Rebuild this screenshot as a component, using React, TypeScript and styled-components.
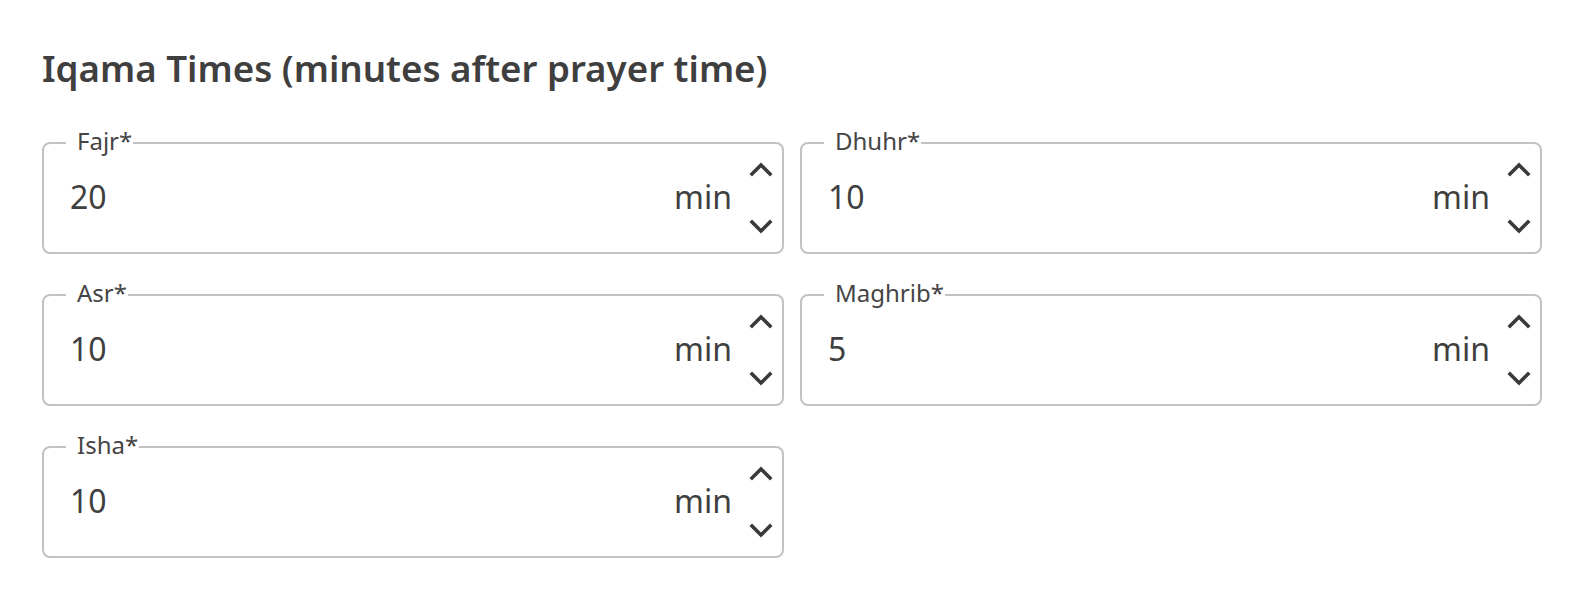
import React, { useState } from "react";
import styled, { createGlobalStyle } from "styled-components";

const GlobalStyle = createGlobalStyle`
  html, body {
    margin: 0;
    padding: 0;
    background: #ffffff;
  }
  body {
    font-family: "Noto Sans", "Open Sans", Arial, sans-serif;
    color: #3f3f3f;
  }
`;

const Page = styled.div`
  width: 1584px;
  box-sizing: border-box;
  padding: 46px 42px 0 42px;
`;

const Title = styled.h2`
  margin: 0 0 52px 0;
  font-size: 36.7px;
  line-height: 44px;
  font-weight: 600;
  color: #3f3f3f;
`;

const FieldGrid = styled.div`
  display: grid;
  grid-template-columns: 1fr 1fr;
  column-gap: 16px;
  row-gap: 40px;
`;

const Field = styled.div`
  position: relative;
  height: 112px;
  box-sizing: border-box;
  border: 2px solid #c2c2c2;
  border-radius: 8px;
  display: flex;
  align-items: center;
  padding: 0 8px 2px 26px;
`;

const Label = styled.label`
  position: absolute;
  left: 22px;
  top: -15px;
  padding: 0 1px 0 11px;
  background: #ffffff;
  font-size: 24px;
  line-height: 24px;
  color: #454545;
`;

const ValueInput = styled.input`
  flex: 1;
  min-width: 0;
  border: none;
  outline: none;
  padding: 0;
  background: transparent;
  font-family: inherit;
  font-size: 32px;
  line-height: 44px;
  color: #3f3f3f;
`;

const Unit = styled.span`
  font-size: 32px;
  line-height: 44px;
  color: #3f3f3f;
`;

const Spinner = styled.div`
  display: flex;
  flex-direction: column;
  justify-content: space-between;
  align-items: center;
  height: 76px;
  margin: 2px 0 0 16px;
`;

const SpinButton = styled.button`
  display: flex;
  align-items: center;
  justify-content: center;
  width: 26px;
  height: 18px;
  padding: 0;
  border: none;
  background: none;
  cursor: pointer;
  color: #3a3a3a;
`;

const Chevron = ({ up }: { up?: boolean }) => (
  <svg width="24" height="16" viewBox="0 0 24 16" fill="none">
    <polyline
      points={up ? "3,13 12,4 21,13" : "3,3 12,12 21,3"}
      stroke="currentColor"
      strokeWidth="3.6"
      strokeLinecap="square"
    />
  </svg>
);

type Prayer = { name: string; value: number };

const initial: Prayer[] = [
  { name: "Fajr", value: 20 },
  { name: "Dhuhr", value: 10 },
  { name: "Asr", value: 10 },
  { name: "Maghrib", value: 5 },
  { name: "Isha", value: 10 },
];

function MinutesField({
  prayer,
  onChange,
}: {
  prayer: Prayer;
  onChange: (v: number) => void;
}) {
  const id = `iqama-${prayer.name.toLowerCase()}`;
  return (
    <Field>
      <Label htmlFor={id}>{prayer.name}*</Label>
      <ValueInput
        id={id}
        value={prayer.value}
        onChange={(e) => onChange(Number(e.target.value.replace(/\D/g, "")) || 0)}
      />
      <Unit>min</Unit>
      <Spinner>
        <SpinButton aria-label="increase" onClick={() => onChange(prayer.value + 1)}>
          <Chevron up />
        </SpinButton>
        <SpinButton aria-label="decrease" onClick={() => onChange(Math.max(0, prayer.value - 1))}>
          <Chevron />
        </SpinButton>
      </Spinner>
    </Field>
  );
}

export default function App() {
  const [prayers, setPrayers] = useState<Prayer[]>(initial);

  const update = (i: number, v: number) =>
    setPrayers((p) => p.map((x, j) => (j === i ? { ...x, value: v } : x)));

  return (
    <>
      <GlobalStyle />
      <Page>
        <Title>Iqama Times (minutes after prayer time)</Title>
        <FieldGrid>
          {prayers.map((p, i) => (
            <MinutesField key={p.name} prayer={p} onChange={(v) => update(i, v)} />
          ))}
        </FieldGrid>
      </Page>
    </>
  );
}
